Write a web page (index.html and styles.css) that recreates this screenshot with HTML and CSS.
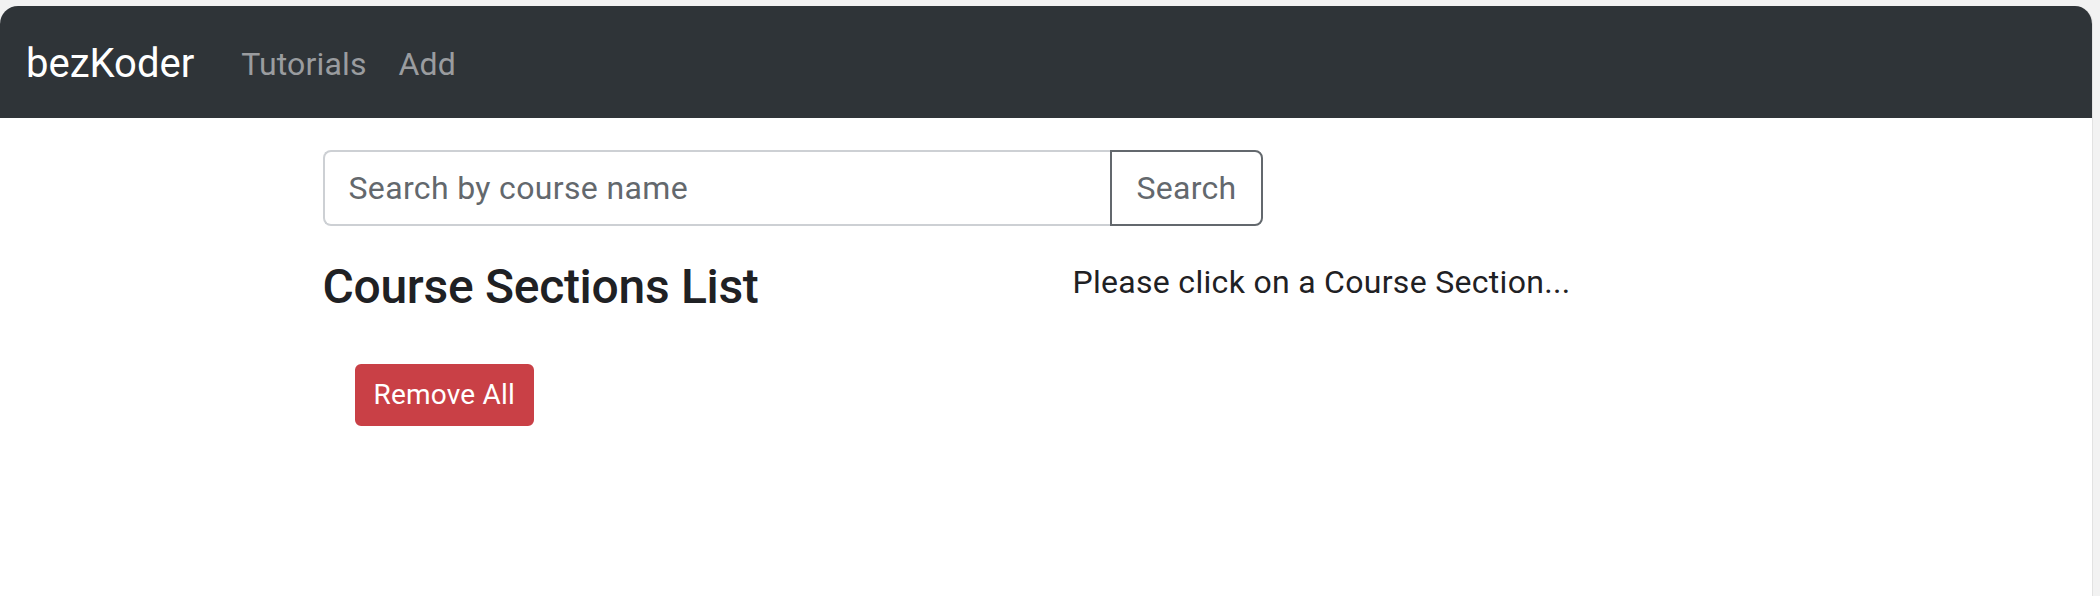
FILE: index.html
```html
<!DOCTYPE html>
<html lang="en">
<head>
<meta charset="utf-8">
<title>bezKoder</title>
<link rel="stylesheet" href="styles.css">
</head>
<body>
<div class="window">
  <nav class="navbar">
    <a class="brand" href="#">bezKoder</a>
    <div class="nav-links">
      <a class="nav-link" href="#">Tutorials</a>
      <a class="nav-link" href="#">Add</a>
    </div>
  </nav>
  <main class="main">
    <div class="container">
      <div class="list">
        <div class="col col-8">
          <div class="input-group">
            <input class="search-input" type="text" placeholder="Search by course name">
            <button class="btn-search" type="button">Search</button>
          </div>
        </div>
        <div class="col col-6">
          <h4 class="list-title">Course Sections List</h4>
          <button class="btn-danger" type="button">Remove All</button>
        </div>
        <div class="col col-6">
          <p class="hint">Please click on a Course Section...</p>
        </div>
      </div>
    </div>
  </main>
</div>
</body>
</html>
```
FILE: styles.css
```css
* { box-sizing: border-box; }
html, body { margin: 0; padding: 0; }
body {
  background: #f2f2f2;
  font-family: Roboto, "Liberation Sans", sans-serif;
  color: #1f2124;
  height: 596px;
  overflow: hidden;
}
.window {
  margin: 6px 7px 0 0;
  background: #ffffff;
  border-top-left-radius: 18px;
  border-top-right-radius: 18px;
  border-right: 1px solid #e2e2e2;
  height: 590px;
  overflow: hidden;
}
.navbar {
  display: flex;
  align-items: center;
  height: 112px;
  padding: 18px 26px 14px;
  background: #2f3438;
}
.brand {
  font-size: 40px;
  line-height: 60px;
  color: #ffffff;
  text-decoration: none;
  margin-right: 31px;
}
.nav-links { display: flex; }
.nav-link {
  font-size: 32px;
  line-height: 48px;
  padding: 16px;
  color: #9a9c9f;
  text-decoration: none;
  letter-spacing: 0.15px;
}
.main { padding: 32px 7px 0 0; }
.container {
  width: 1920px;
  margin: 0 auto;
  padding: 0 30px;
}
.list {
  display: flex;
  flex-wrap: wrap;
  max-width: 1500px;
  margin: 0 auto;
}
.col { padding: 0 30px; }
.col-8 { width: 1000px; }
.col-6 { width: 750px; }
.input-group {
  display: flex;
  height: 76px;
  margin-bottom: 32px;
}
.search-input {
  flex: 1;
  min-width: 0;
  height: 76px;
  font-family: inherit;
  font-size: 32px;
  letter-spacing: 0.35px;
  padding: 12px 24px;
  border: 2px solid #cdd0d4;
  border-right: none;
  border-radius: 8px 0 0 8px;
  color: #495057;
  outline: none;
}
.search-input::placeholder { color: #63686d; opacity: 1; }
.btn-search {
  height: 76px;
  font-family: inherit;
  font-size: 32px;
  letter-spacing: 0.3px;
  padding: 0 24px;
  border: 2px solid #63686d;
  border-radius: 0 8px 8px 0;
  background: #ffffff;
  color: #63686d;
}
.list-title {
  margin: 0 0 16px;
  font-size: 48px;
  font-weight: 500;
  line-height: 58px;
  letter-spacing: -0.3px;
  color: #1f2124;
}
.btn-danger {
  margin: 32px;
  height: 62px;
  padding: 0 17px;
  font-family: inherit;
  font-size: 28px;
  line-height: 42px;
  letter-spacing: 0.2px;
  border: 2px solid #c94046;
  border-radius: 6px;
  background: #c94046;
  color: #ffffff;
}
.hint {
  margin: 0;
  font-size: 32px;
  line-height: 48px;
  letter-spacing: 0.3px;
  color: #1f2124;
}
```
